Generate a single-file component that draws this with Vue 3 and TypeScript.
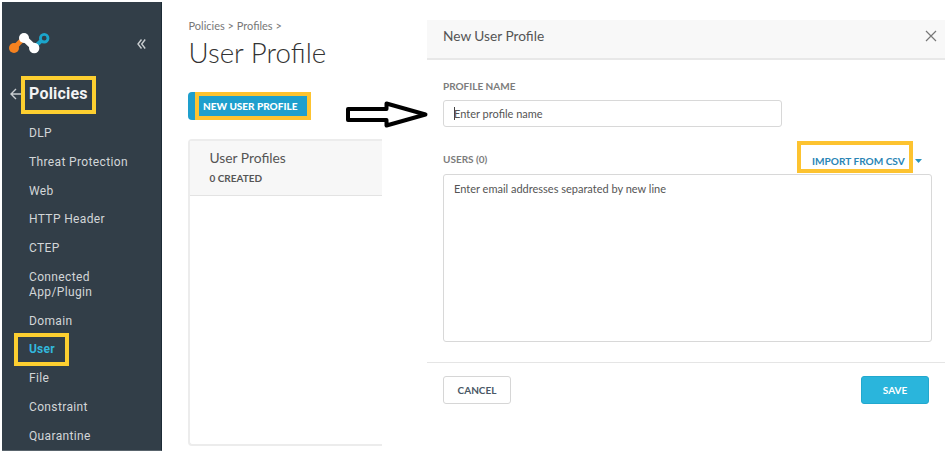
<script setup lang="ts">
import { ref } from 'vue'

interface NavItem {
  label: string
  active?: boolean
}

const navItems: NavItem[] = [
  { label: 'DLP' },
  { label: 'Threat Protection' },
  { label: 'Web' },
  { label: 'HTTP Header' },
  { label: 'CTEP' },
  { label: 'Connected App/Plugin' },
  { label: 'Domain' },
  { label: 'User', active: true },
  { label: 'File' },
  { label: 'Constraint' },
  { label: 'Quarantine' },
]

const profileName = ref('')
const emails = ref('')
</script>

<template>
  <div class="page">
    <aside class="sidebar">
      <div class="brand">
        <svg class="logo" width="42" height="22" viewBox="0 0 42 22">
          <path d="M5 16L14 7" stroke="#f58220" stroke-width="5" />
          <circle cx="5" cy="16" r="5" fill="#f58220" />
          <path d="M25 15.500L32.500 8.500" stroke="#1ba5cb" stroke-width="4" />
          <circle cx="35.200" cy="6.200" r="3.800" fill="none" stroke="#1ba5cb" stroke-width="2.800" />
          <path d="M15 6L25 15.500" stroke="#fff" stroke-width="6.500" />
          <circle cx="15" cy="6" r="5" fill="#fff" />
          <circle cx="25.200" cy="16" r="5.200" fill="#fff" />
        </svg>
        <svg class="collapse" width="9" height="10" viewBox="0 0 9 10">
          <path d="M4.500 0.500L1 5l3.500 4.500M8.200 0.500L4.700 5l3.500 4.500" />
        </svg>
      </div>
      <div class="section">
        <svg class="back" width="12" height="12" viewBox="0 0 12 12">
          <path d="M12 6H1M6 1L1 6l5 5" />
        </svg>
        <h2 class="section-title marked marked-title">Policies</h2>
      </div>
      <nav class="nav">
        <a v-for="item in navItems" :key="item.label" class="nav-item" :class="{ active: item.active }">
          <span :class="{ marked: item.active, 'marked-nav': item.active }">{{ item.label }}</span>
        </a>
      </nav>
    </aside>

    <main class="content">
      <p class="crumbs">Policies &gt; Profiles &gt;</p>
      <h1 class="heading">User Profile</h1>
      <button class="new-profile"><span>NEW USER PROFILE</span></button>
      <section class="list">
        <header class="list-header">
          <h3>User Profiles</h3>
          <p>0 CREATED</p>
        </header>
      </section>
    </main>

    <section class="dialog">
      <header class="dialog-header">
        <h2>New User Profile</h2>
        <svg class="close" width="12" height="12" viewBox="0 0 12 12">
          <path d="M1 1l10 10M11 1L1 11" />
        </svg>
      </header>
      <div class="dialog-body">
        <label class="label name-label">PROFILE NAME</label>
        <div class="name-field">
          <i class="caret"></i>
          <input v-model="profileName" placeholder="Enter profile name" />
        </div>
        <div class="users-row">
          <label class="label">USERS (0)</label>
          <div class="import">
            <a class="marked marked-import">IMPORT FROM CSV</a>
            <i class="triangle"></i>
          </div>
        </div>
        <textarea v-model="emails" class="emails" placeholder="Enter email addresses separated by new line"></textarea>
      </div>
      <footer class="dialog-footer">
        <button class="cancel">CANCEL</button>
        <button class="save">SAVE</button>
      </footer>
    </section>

    <svg class="arrow" width="84" height="28" viewBox="0 0 84 28">
      <path d="M3 9H41.500V3.500L80.500 14.500L41.500 25.500V20H3Z" />
    </svg>
  </div>
</template>

<style>
body {
  margin: 0;
  background: #fff;
}
</style>

<style scoped>
* {
  box-sizing: border-box;
}
h1, h2, h3, p {
  margin: 0;
  font-weight: 400;
}
button, input, textarea {
  font-family: inherit;
  outline: none;
}
.page {
  position: relative;
  display: flex;
  width: 945px;
  height: 454px;
  padding: 2px 0 0 2px;
  overflow: hidden;
  font-family: Lato, sans-serif;
  background: #fff;
}
.sidebar {
  flex: none;
  width: 160px;
  height: 449px;
  padding-top: 30px;
  background: #323e48;
  border-right: 1px solid #1c2b36;
  border-bottom: 1px solid #59646c;
  font-family: Roboto, sans-serif;
  color: #d3d6d8;
}
.brand {
  display: flex;
  align-items: center;
  justify-content: space-between;
  height: 22px;
  padding: 0 15px 0 7px;
}
.collapse, .back, .close {
  fill: none;
  stroke: #c9cdd0;
  stroke-width: 1.4;
}
.collapse {
  margin-top: 2px;
}
.section {
  display: flex;
  align-items: center;
  height: 38px;
  margin-top: 22px;
  padding-left: 8px;
}
.back {
  margin-top: -3px;
}
.section-title {
  font-size: 16px;
  font-weight: 700;
  letter-spacing: 0.2px;
  line-height: 28px;
  color: #f2f3f4;
}
.marked {
  border: 4px solid #fdcf30;
}
.marked-title {
  width: 75px;
  height: 38px;
  margin-left: -1px;
  padding-left: 4px;
}
.nav {
  display: flex;
  flex-direction: column;
  gap: 13.35px;
  margin-top: 12px;
  padding-left: 27px;
}
.nav-item {
  width: 110px;
  font-size: 12px;
  line-height: 15.4px;
  letter-spacing: 0.36px;
}
.nav-item:nth-child(6) {
  width: 75px;
}
.nav-item.active {
  font-weight: 700;
  letter-spacing: 0.2px;
  color: #32b8dd;
}
.marked-nav {
  display: block;
  width: 55px;
  height: 33px;
  margin: -9.200px 0 -8.400px -15px;
  padding: 5px 0 0 11px;
}
.content {
  flex: none;
  width: 220px;
  padding: 16px 0 0 26px;
}
.crumbs {
  padding-left: 0.5px;
  font-size: 11px;
  line-height: 16px;
  color: #777;
}
.heading {
  margin-top: 2px;
  padding-left: 0.5px;
  font-size: 27.700px;
  font-weight: 300;
  line-height: 34px;
  color: #333;
}
.new-profile {
  display: block;
  width: 123px;
  height: 28px;
  margin-top: 22px;
  padding: 0 0 0 7px;
  border: 0;
  border-radius: 4px 0 0 4px;
  background: #1e9fcd;
}
.new-profile span {
  display: block;
  height: 28px;
  padding-left: 4px;
  border: 4px solid #fdc330;
  font-size: 10px;
  font-weight: 900;
  line-height: 21px;
  text-align: left;
  color: #fff;
  white-space: nowrap;
}
.list {
  height: 307px;
  margin-top: 19px;
  border: 2px solid #ececec;
  border-right: 0;
  border-radius: 4px 0 0 4px;
}
.list-header {
  height: 55px;
  padding: 8px 0 0 19.500px;
  border-bottom: 1px solid #e3e3e3;
  background: #f7f7f7;
}
.list-header h3 {
  font-size: 13.800px;
  line-height: 18px;
  color: #555;
}
.list-header p {
  margin-top: 3px;
  font-size: 10px;
  font-weight: 700;
  line-height: 16px;
  color: #555;
}
.dialog {
  flex: 1;
  margin: 18px 0 0 45px;
}
.dialog-header {
  display: flex;
  justify-content: space-between;
  height: 40px;
  padding: 8px 8px 0 16px;
  border-bottom: 2px solid #e8e8e8;
  background: #f8f8f8;
}
.dialog-header h2 {
  font-size: 13.700px;
  line-height: 15px;
  color: #555;
}
.close {
  margin-top: 2px;
  stroke: #777;
  stroke-width: 1.2;
}
.dialog-body {
  height: 302px;
  padding: 18px 13px 0 16px;
}
.label {
  font-size: 10px;
  font-weight: 700;
  line-height: 16px;
  color: #7c7c7c;
}
.name-label {
  display: block;
}
.name-field {
  display: flex;
  align-items: center;
  width: 339px;
  height: 27px;
  margin-top: 6px;
  padding-left: 10px;
  border: 1px solid #d8d8d8;
  border-radius: 3px;
}
.caret {
  width: 1px;
  height: 13px;
  margin-right: -1px;
  background: #444;
}
.name-field input {
  width: 300px;
  padding: 0;
  border: 0;
  background: transparent;
  font-size: 11px;
}
::placeholder {
  color: #555;
  opacity: 1;
}
.users-row {
  display: flex;
  justify-content: space-between;
  height: 47px;
  padding-top: 24px;
}
.import {
  display: flex;
  margin: -10px 10px 0 0;
}
.marked-import {
  width: 116px;
  height: 32px;
  padding-left: 11px;
  border-color: #fdc330;
  font-size: 10.100px;
  font-weight: 700;
  line-height: 32px;
  color: #2a85b5;
  white-space: nowrap;
}
.triangle {
  width: 7px;
  height: 4px;
  margin: 18px 0 0 2px;
  background: #2a93bd;
  clip-path: polygon(0 0, 100% 0, 50% 100%);
}
.emails {
  display: block;
  width: 489px;
  height: 168px;
  padding: 7px 10px;
  border: 1px solid #d8d8d8;
  border-radius: 3px;
  font-size: 11px;
  line-height: 14px;
  resize: none;
}
.dialog-footer {
  display: flex;
  justify-content: space-between;
  padding: 13px 16px 0;
  border-top: 1px solid #e5e5e5;
}
.dialog-footer button {
  width: 68px;
  height: 28px;
  padding: 0;
  border: 1px solid #d6d6d6;
  border-radius: 3px;
  background: #fff;
  font-size: 10px;
  font-weight: 700;
  color: #4a5866;
}
.dialog-footer .save {
  border-color: #22a8ce;
  background: #2ab5dc;
  color: #fff;
}
.arrow {
  position: absolute;
  left: 345px;
  top: 100px;
  fill: #fff;
  stroke: #000;
  stroke-width: 4;
  stroke-linejoin: round;
}
</style>
